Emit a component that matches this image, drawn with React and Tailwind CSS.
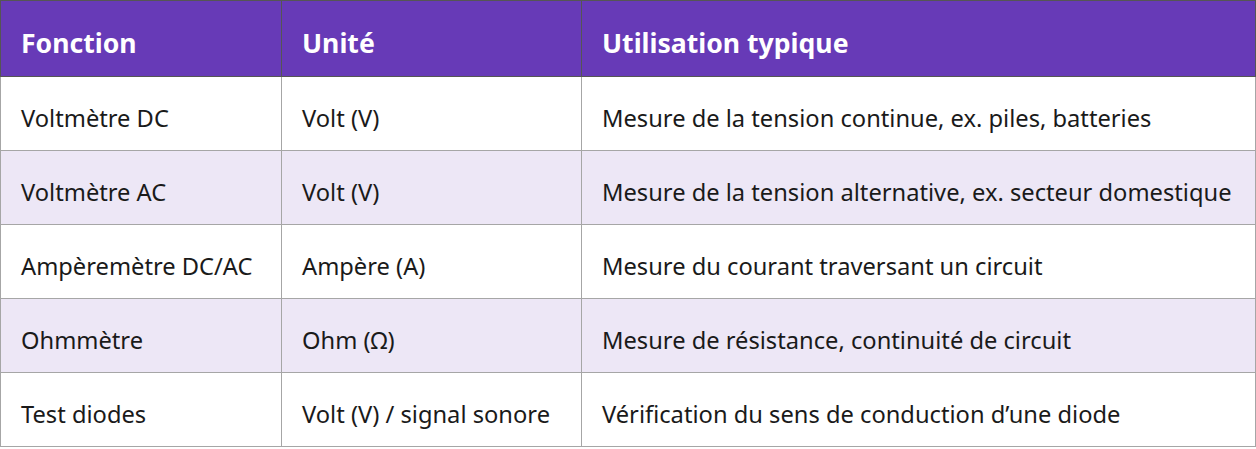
import React from 'react';

const rows = [
  ['Voltmètre DC', 'Volt (V)', 'Mesure de la tension continue, ex. piles, batteries'],
  ['Voltmètre AC', 'Volt (V)', 'Mesure de la tension alternative, ex. secteur domestique'],
  ['Ampèremètre DC/AC', 'Ampère (A)', 'Mesure du courant traversant un circuit'],
  ['Ohmmètre', 'Ohm (Ω)', 'Mesure de résistance, continuité de circuit'],
  ['Test diodes', 'Volt (V) / signal sonore', 'Vérification du sens de conduction d’une diode'],
];

const App = () => {
  return (
    <div className="bg-white" style={{ fontFamily: '"Noto Sans", "Open Sans", sans-serif' }}>
      <table className="w-[1256px] border-collapse table-fixed text-[23.7px] text-[#1a1a1a]">
        <colgroup>
          <col className="w-[281px]" />
          <col className="w-[300px]" />
          <col />
        </colgroup>
        <thead>
          <tr className="h-[76px] bg-[#673ab7] text-white">
            <th className="border border-[#555] px-[20px] pt-[8px] text-left font-bold text-[26.6px] leading-[34px]">Fonction</th>
            <th className="border border-[#555] px-[20px] pt-[8px] text-left font-bold text-[26.6px] leading-[34px]">Unité</th>
            <th className="border border-[#555] px-[20px] pt-[8px] text-left font-bold text-[26.6px] leading-[34px]">Utilisation typique</th>
          </tr>
        </thead>
        <tbody>
          {rows.map((r, i) => (
            <tr key={r[0]} className={`h-[74px] ${i % 2 === 1 ? 'bg-[#ede7f6]' : 'bg-white'}`}>
              {r.map((c) => (
                <td key={c} className="border border-[#a6a6a6] px-[20px] pt-[8px] leading-[32px] whitespace-nowrap">
                  {c}
                </td>
              ))}
            </tr>
          ))}
        </tbody>
      </table>
    </div>
  );
};

export default App;
